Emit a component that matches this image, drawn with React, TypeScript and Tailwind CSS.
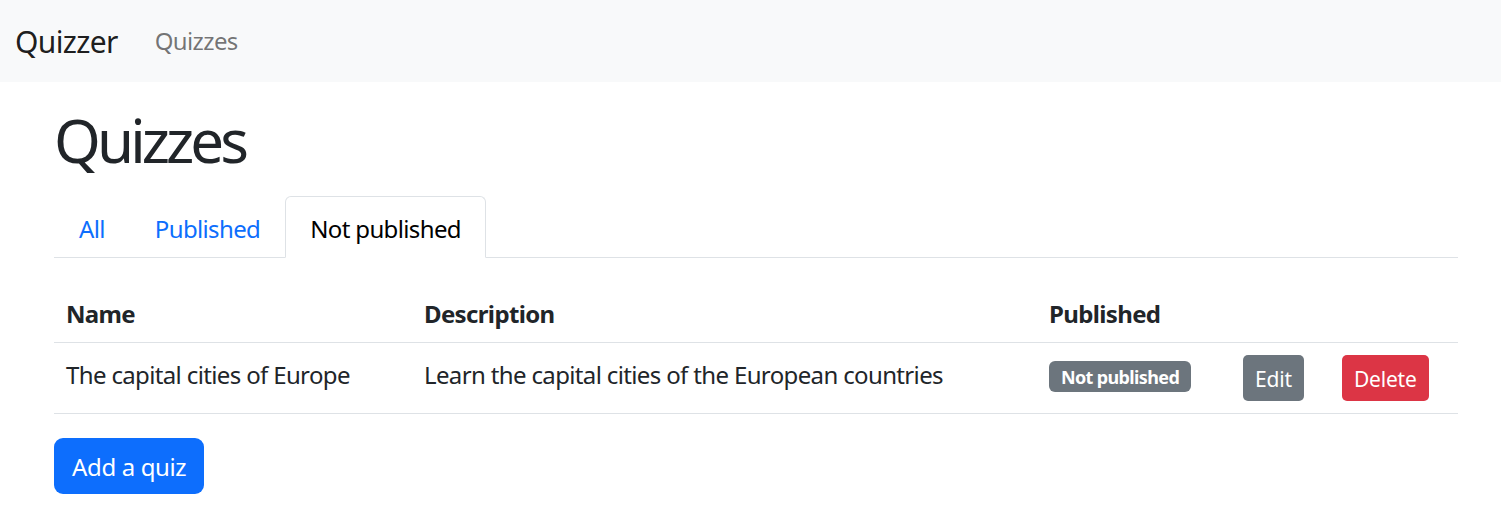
import React from "react";

const font = { fontFamily: '"Noto Sans", "Open Sans", sans-serif' };

export default function App() {
  const tabs = [
    { label: "All", active: false },
    { label: "Published", active: false },
    { label: "Not published", active: true },
  ];

  return (
    <div className="min-h-[519px] bg-white tracking-[-0.04em] text-[#212529]" style={font}>
      <nav className="flex h-[82px] items-center bg-[#f8f9fa] px-[15px]">
        <span className="mr-[37px] text-[30px] leading-[45px] text-black/90">Quizzer</span>
        <span className="text-[24px] leading-[36px] text-black/55">Quizzes</span>
      </nav>

      <div className="ml-[54px] w-[1404px]">
        <h1 className="mt-[22px] mb-[20px] text-[60px] leading-[72px] font-normal tracking-[-0.065em]">Quizzes</h1>

        <ul className="flex border-b border-[#dee2e6]">
          {tabs.map((t) => (
            <li key={t.label} className="-mb-px">
              <a
                className={
                  t.active
                    ? "block rounded-t-[6px] border border-[#dee2e6] border-b-white bg-white px-[24px] pt-[14px] pb-[10px] text-[24px] leading-[36px] text-black"
                    : "block rounded-t-[6px] border border-transparent px-[24px] pt-[14px] pb-[10px] text-[24px] leading-[36px] text-[#0d6efd]"
                }
                href="#"
              >
                {t.label}
              </a>
            </li>
          ))}
        </ul>

        <table className="mt-[24px] w-full border-collapse text-[24px] leading-[36px]">
          <thead>
            <tr className="border-b border-[#dee2e6]">
              <th className="w-[358px] px-[12px] pt-[14px] pb-[10px] text-left font-bold">Name</th>
              <th className="w-[625px] px-[12px] pt-[14px] pb-[10px] text-left font-bold">Description</th>
              <th className="w-[194px] px-[12px] pt-[14px] pb-[10px] text-left font-bold">Published</th>
              <th className="w-[99px] px-[12px] py-[12px]"></th>
              <th className="w-[128px] px-[12px] py-[12px]"></th>
            </tr>
          </thead>
          <tbody>
            <tr className="border-b border-[#dee2e6]">
              <td className="px-[12px] pt-[14px] pb-[10px] align-top">The capital cities of Europe</td>
              <td className="px-[12px] pt-[14px] pb-[10px] align-top">Learn the capital cities of the European countries</td>
              <td className="px-[12px] py-[12px] align-top">
                <span className="mt-[6px] inline-block rounded-[6px] bg-[#6c757d] px-[12px] pt-[7px] pb-[5px] align-top text-[18px] leading-[19px] font-bold text-white">
                  Not published
                </span>
              </td>
              <td className="px-[12px] py-[12px] align-top">
                <button className="block h-[46px] rounded-[5px] bg-[#6c757d] px-[12px] pt-[2px] text-[21px] leading-[31px] tracking-[-0.01em] text-white">
                  Edit
                </button>
              </td>
              <td className="px-[12px] py-[12px] align-top">
                <button className="block h-[46px] rounded-[5px] bg-[#dc3545] px-[12px] pt-[2px] text-[21px] leading-[31px] tracking-[-0.01em] text-white">
                  Delete
                </button>
              </td>
            </tr>
          </tbody>
        </table>

        <button className="mt-[24px] h-[56px] rounded-[9px] bg-[#0d6efd] px-[18px] pt-[2px] text-[24px] leading-[36px] tracking-[-0.015em] text-white">
          Add a quiz
        </button>
      </div>
    </div>
  );
}
